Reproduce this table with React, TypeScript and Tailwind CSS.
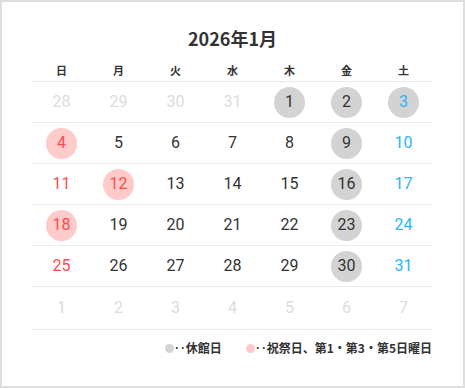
import React from "react";

type Day = { n: number; kind: "other" | "normal" | "sun" | "sat"; mark?: "closed" | "holiday" };

const weeks: Day[][] = [
  [
    { n: 28, kind: "other" },
    { n: 29, kind: "other" },
    { n: 30, kind: "other" },
    { n: 31, kind: "other" },
    { n: 1, kind: "normal", mark: "closed" },
    { n: 2, kind: "normal", mark: "closed" },
    { n: 3, kind: "sat", mark: "closed" },
  ],
  [
    { n: 4, kind: "sun", mark: "holiday" },
    { n: 5, kind: "normal" },
    { n: 6, kind: "normal" },
    { n: 7, kind: "normal" },
    { n: 8, kind: "normal" },
    { n: 9, kind: "normal", mark: "closed" },
    { n: 10, kind: "sat" },
  ],
  [
    { n: 11, kind: "sun" },
    { n: 12, kind: "sun", mark: "holiday" },
    { n: 13, kind: "normal" },
    { n: 14, kind: "normal" },
    { n: 15, kind: "normal" },
    { n: 16, kind: "normal", mark: "closed" },
    { n: 17, kind: "sat" },
  ],
  [
    { n: 18, kind: "sun", mark: "holiday" },
    { n: 19, kind: "normal" },
    { n: 20, kind: "normal" },
    { n: 21, kind: "normal" },
    { n: 22, kind: "normal" },
    { n: 23, kind: "normal", mark: "closed" },
    { n: 24, kind: "sat" },
  ],
  [
    { n: 25, kind: "sun" },
    { n: 26, kind: "normal" },
    { n: 27, kind: "normal" },
    { n: 28, kind: "normal" },
    { n: 29, kind: "normal" },
    { n: 30, kind: "normal", mark: "closed" },
    { n: 31, kind: "sat" },
  ],
  [
    { n: 1, kind: "other" },
    { n: 2, kind: "other" },
    { n: 3, kind: "other" },
    { n: 4, kind: "other" },
    { n: 5, kind: "other" },
    { n: 6, kind: "other" },
    { n: 7, kind: "other" },
  ],
];

const heads = ["日", "月", "火", "水", "木", "金", "土"];

function DayCell({ d }: { d: Day }) {
  const color =
    d.kind === "other"
      ? "text-[#dcdcdc]"
      : d.kind === "sun"
      ? "text-[#ff4b4b]"
      : d.kind === "sat"
      ? "text-[#2db3f6]"
      : "text-[#333333]";
  const bg =
    d.mark === "closed" ? "bg-[#d3d3d3]" : d.mark === "holiday" ? "bg-[#ffcaca]" : "";
  return (
    <div className="flex-1 flex items-center justify-center">
      <div
        className={`w-[31px] h-[31px] rounded-full flex items-center justify-center text-[16px] leading-none ${color} ${bg}`}
      >
        {d.n}
      </div>
    </div>
  );
}

export default function App() {
  return (
    <div
      className="w-[465px] h-[388px] bg-white border-2 border-[#dedede] px-[31px] pt-[24px]"
      style={{ fontFamily: "Roboto, 'Noto Sans CJK JP', sans-serif" }}
    >
      <div
        className="h-[24px] flex items-center justify-center text-[18px] font-bold text-[#333333]"
        style={{ fontFamily: "'Noto Sans CJK JP', sans-serif" }}
      >
        2026年1月
      </div>
      <div
        className="flex h-[32px] items-end pb-[3px] border-b border-[#ebebeb]"
        style={{ fontFamily: "'Noto Sans CJK JP', sans-serif" }}
      >
        {heads.map((h) => (
          <div key={h} className="flex-1 text-center text-[11px] font-bold text-[#333333] leading-[16px]">
            {h}
          </div>
        ))}
      </div>
      {weeks.map((w, i) => (
        <div
          key={i}
          className={`flex border-b border-[#ebebeb] ${i === 5 ? "h-[43px]" : "h-[41px]"}`}
        >
          {w.map((d, j) => (
            <DayCell key={j} d={d} />
          ))}
        </div>
      ))}
      <div
        className="flex justify-end items-center gap-[24px] mt-[10px] text-[12px] font-bold text-[#333333] leading-[16px]"
        style={{ fontFamily: "'Noto Sans CJK JP', sans-serif" }}
      >
        <div className="flex items-center">
          <span className="w-[9px] h-[9px] rounded-full bg-[#d3d3d3] inline-block" />
          <span>‥休館日</span>
        </div>
        <div className="flex items-center">
          <span className="w-[9px] h-[9px] rounded-full bg-[#ffcaca] inline-block" />
          <span>‥祝祭日、第1・第3・第5日曜日</span>
        </div>
      </div>
    </div>
  );
}
